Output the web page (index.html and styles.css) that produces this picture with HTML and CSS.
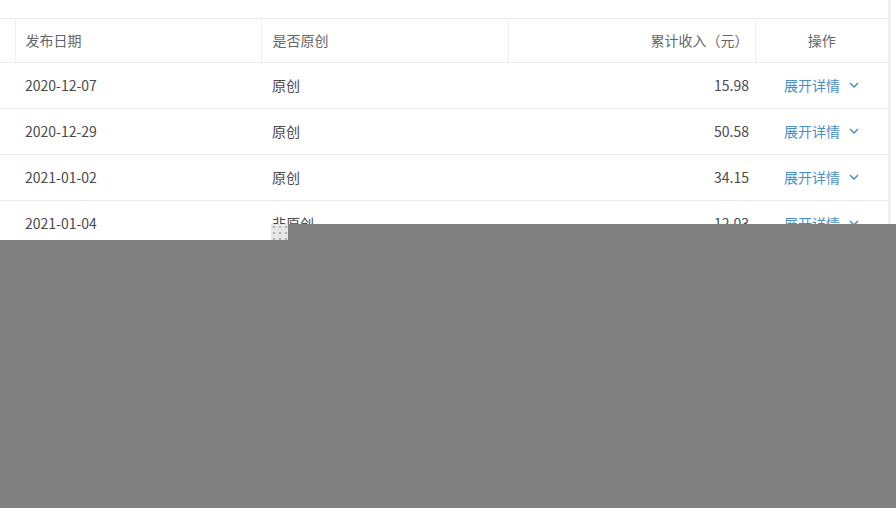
FILE: index.html
```html
<!DOCTYPE html>
<html lang="zh-CN">
<head>
    <meta charset="UTF-8">
    <title>收入明细</title>
    <link rel="stylesheet" href="styles.css">
</head>
<body>
    <div class="page">
        <div class="table-wrap">
            <table class="income-table">
                <colgroup>
                    <col class="w-sel">
                    <col class="w-first">
                    <col class="w-data">
                    <col class="w-data">
                    <col class="w-op">
                </colgroup>
                <thead>
                    <tr>
                        <th class="col-sel"></th>
                        <th>发布日期</th>
                        <th class="col-orig">是否原创</th>
                        <th class="col-money">累计收入（元）</th>
                        <th class="col-op">操作</th>
                    </tr>
                </thead>
                <tbody>
                    <tr>
                        <td class="col-sel"></td>
                        <td>2020-12-07</td>
                        <td class="col-orig">原创</td>
                        <td class="col-money">15.98</td>
                        <td class="col-op"><a class="expand">展开详情<svg class="chev" viewBox="0 0 10 6" width="10" height="6"><path d="M1 1 L5 5 L9 1" /></svg></a></td>
                    </tr>
                    <tr>
                        <td class="col-sel"></td>
                        <td>2020-12-29</td>
                        <td class="col-orig">原创</td>
                        <td class="col-money">50.58</td>
                        <td class="col-op"><a class="expand">展开详情<svg class="chev" viewBox="0 0 10 6" width="10" height="6"><path d="M1 1 L5 5 L9 1" /></svg></a></td>
                    </tr>
                    <tr>
                        <td class="col-sel"></td>
                        <td>2021-01-02</td>
                        <td class="col-orig">原创</td>
                        <td class="col-money">34.15</td>
                        <td class="col-op"><a class="expand">展开详情<svg class="chev" viewBox="0 0 10 6" width="10" height="6"><path d="M1 1 L5 5 L9 1" /></svg></a></td>
                    </tr>
                    <tr>
                        <td class="col-sel"></td>
                        <td>2021-01-04</td>
                        <td class="col-orig">非原创</td>
                        <td class="col-money">12.03</td>
                        <td class="col-op"><a class="expand">展开详情<svg class="chev" viewBox="0 0 10 6" width="10" height="6"><path d="M1 1 L5 5 L9 1" /></svg></a></td>
                    </tr>
                    <tr>
                        <td class="col-sel"></td>
                        <td>2021-01-09</td>
                        <td class="col-orig">原创</td>
                        <td class="col-money">8.40</td>
                        <td class="col-op"><a class="expand">展开详情<svg class="chev" viewBox="0 0 10 6" width="10" height="6"><path d="M1 1 L5 5 L9 1" /></svg></a></td>
                    </tr>
                </tbody>
            </table>
            <div class="scroll-edge"></div>
        </div>
        <!-- masked part of the capture -->
        <div class="mask mask-right"></div>
        <div class="mask mask-bottom"></div>
        <div class="mask-patch"></div>
    </div>
</body>
</html>
```

FILE: styles.css
```css
body {
    margin: 0;
    background: #fff;
    font-family: "Noto Sans CJK SC", "Noto Sans", sans-serif;
    font-size: 14px;
    color: #444;
    overflow: hidden;
}
.page {
    position: relative;
    width: 896px;
    height: 508px;
    padding-top: 18px;
    box-sizing: border-box;
}
.table-wrap {
    display: flex;
}
.income-table {
    width: 888px;
    border-collapse: collapse;
    table-layout: fixed;
}
.w-sel { width: 15px; }
.w-first { width: 246px; }
.w-data { width: 247px; }
.w-op { width: 133px; }
.income-table th,
.income-table td {
    border-bottom: 1px solid #ebebeb;
    padding: 0 10px 2px;
    text-align: left;
    white-space: nowrap;
}
.income-table thead tr {
    border-top: 1px solid #ebebeb;
}
.income-table th {
    height: 41px;
    font-weight: normal;
    color: #666;
    border-left: 1px solid #efefef;
}
.income-table th:first-child {
    border-left: none;
}
.income-table td {
    height: 43px;
    color: #4a4a4a;
}
.income-table .col-sel {
    padding: 0;
}
.income-table .col-orig {
    padding-left: 11px;
}
.income-table .col-money {
    text-align: right;
    padding-right: 6px;
}
.income-table .col-op {
    text-align: center;
    padding: 0 0 2px;
}
.expand {
    color: #4b8fc6;
    cursor: pointer;
    display: inline-flex;
    align-items: center;
    gap: 9px;
}
.chev {
    fill: none;
    stroke: #4b8fc6;
    stroke-width: 1.5;
}
.scroll-edge {
    width: 3px;
    background: #f0f0f0;
    align-self: stretch;
    margin-top: -18px;
}
.mask {
    position: absolute;
    background: #808080;
}
.mask-right {
    left: 288px;
    top: 224px;
    right: 0;
    bottom: 0;
}
.mask-bottom {
    left: 0;
    top: 240px;
    width: 288px;
    bottom: 0;
}
.mask-patch {
    position: absolute;
    left: 271px;
    top: 224px;
    width: 17px;
    height: 16px;
    background-color: #e6e6e6;
    background-image: radial-gradient(#b0b0b0 1px, transparent 1.2px);
    background-size: 6px 6px;
}
```
